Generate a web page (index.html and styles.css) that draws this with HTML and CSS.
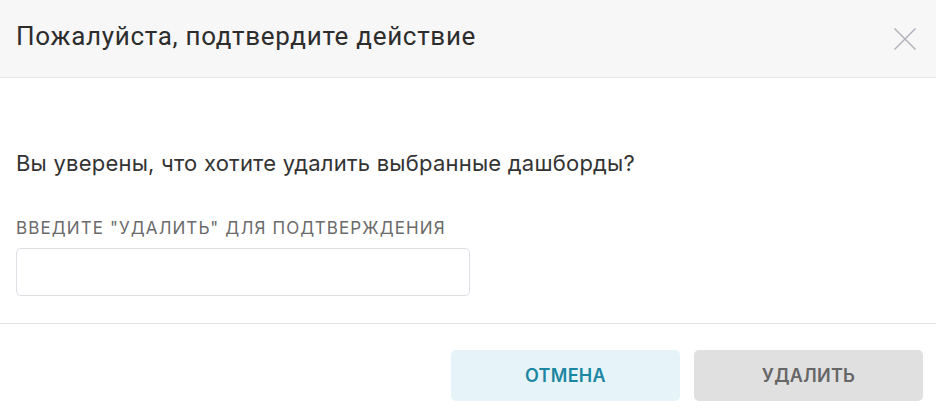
FILE: index.html
```html
<!DOCTYPE html>
<html>
<head>
    <title>Подтверждение</title>
    <link rel="stylesheet" href="styles.css">
</head>
<body>
    <div class="modal">
        <div class="modal-header">
            <h4>Пожалуйста, подтвердите действие</h4>
            <button class="close" aria-label="Закрыть">
                <svg width="24" height="24" viewBox="0 0 24 24">
                    <path d="M1.5 1.5 L22.5 22.5 M22.5 1.5 L1.5 22.5" stroke="#b4b4bf" stroke-width="1.6" fill="none"/>
                </svg>
            </button>
        </div>

        <div class="modal-body">
            <p class="question">Вы уверены, что хотите удалить выбранные дашборды?</p>
            <label for="confirm-input">Введите "УДАЛИТЬ" для подтверждения</label>
            <input type="text" id="confirm-input">
        </div>

        <div class="modal-footer">
            <button class="btn btn-cancel">Отмена</button>
            <button class="btn btn-delete" disabled>Удалить</button>
        </div>
    </div>
</body>
</html>
```

FILE: styles.css
```css
/* Global CSS */
* {
    box-sizing: border-box;
}

body {
    font-family: Inter, "Noto Sans", sans-serif;
    margin: 0;
    padding: 0;
    background-color: #fff;
    color: #323232;
}

/* Header */
.modal-header {
    display: flex;
    align-items: center;
    justify-content: space-between;
    height: 78px;
    padding: 0 16px;
    background-color: #f7f7f7;
    border-bottom: 1px solid #e6e6e6;
}

.modal-header h4 {
    margin: 0 0 5px;
    font-family: Roboto, sans-serif;
    font-size: 26px;
    font-weight: 400;
    letter-spacing: 0.7px;
    line-height: 30px;
    color: #2d2d2d;
}

.close {
    display: flex;
    padding: 0;
    margin-right: 3px;
    background: none;
    border: none;
    cursor: pointer;
}

/* Body */
.modal-body {
    display: flex;
    flex-direction: column;
    align-items: flex-start;
    padding: 70px 16px 27px;
    border-bottom: 1px solid #e3e3e3;
}

.question {
    margin: 0 0 40px;
    font-size: 22px;
    letter-spacing: 0.22px;
    line-height: 30px;
    color: #333;
}

.modal-body label {
    margin-bottom: 10px;
    font-size: 17px;
    letter-spacing: 1.1px;
    line-height: 20px;
    text-transform: uppercase;
    color: #6b6b6b;
}

.modal-body input {
    width: 454px;
    height: 48px;
    padding: 0 12px;
    border: 1px solid #dedee6;
    border-radius: 5px;
    font-family: Inter, sans-serif;
    font-size: 16px;
}

/* Footer */
.modal-footer {
    display: flex;
    justify-content: flex-end;
    gap: 14px;
    padding: 26px 13px 0;
}

.btn {
    width: 229px;
    height: 51px;
    border: none;
    border-radius: 5px;
    font-family: Inter, sans-serif;
    font-size: 18px;
    font-weight: 600;
    letter-spacing: 0.3px;
    text-transform: uppercase;
    cursor: pointer;
}

.btn-cancel {
    background-color: #e6f4f9;
    color: #1c86a2;
}

.btn-delete {
    background-color: #e0e0e0;
    color: #666;
    cursor: default;
}
```
